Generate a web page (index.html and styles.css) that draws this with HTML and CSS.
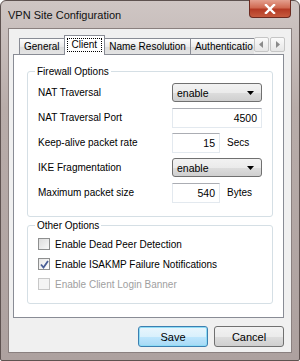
FILE: index.html
```html
<!DOCTYPE html>
<html lang="en">
<head>
    <meta charset="UTF-8">
    <title>VPN Site Configuration</title>
    <link rel="stylesheet" href="styles.css">
</head>
<body>
    <div class="window">
        <div class="titlebar">
            <span class="title">VPN Site Configuration</span>
            <span class="close">
                <svg width="12" height="10" viewBox="0 0 12 10"><path d="M2 1 L10 9 M10 1 L2 9" stroke="#fff" stroke-width="2.4" stroke-linecap="square"/></svg>
            </span>
        </div>
        <div class="client">
            <div class="tabstrip">
                <div class="tab">General</div>
                <div class="tab active"><span class="focus">Client</span></div>
                <div class="tab">Name Resolution</div>
                <div class="tab last">Authenticatio</div>
                <div class="scroller">
                    <span class="arrow"><svg width="5" height="7" viewBox="0 0 5 7"><path d="M4 0 L0 3.5 L4 7 Z" fill="#8a8a8a"/></svg></span>
                    <span class="arrow"><svg width="5" height="7" viewBox="0 0 5 7"><path d="M1 0 L5 3.5 L1 7 Z" fill="#8a8a8a"/></svg></span>
                </div>
            </div>
            <div class="panel">
                <fieldset class="group firewall">
                    <legend>Firewall Options</legend>
                    <div class="row">
                        <span class="label">NAT Traversal</span>
                        <div class="combo">enable<svg width="7" height="4" viewBox="0 0 7 4"><path d="M0 0 H7 L3.5 4 Z" fill="#000"/></svg></div>
                    </div>
                    <div class="row">
                        <span class="label">NAT Traversal Port</span>
                        <div class="field wide">4500</div>
                    </div>
                    <div class="row">
                        <span class="label">Keep-alive packet rate</span>
                        <div class="field narrow">15</div>
                        <span class="unit">Secs</span>
                    </div>
                    <div class="row">
                        <span class="label">IKE Fragmentation</span>
                        <div class="combo">enable<svg width="7" height="4" viewBox="0 0 7 4"><path d="M0 0 H7 L3.5 4 Z" fill="#000"/></svg></div>
                    </div>
                    <div class="row">
                        <span class="label">Maximum packet size</span>
                        <div class="field narrow">540</div>
                        <span class="unit">Bytes</span>
                    </div>
                </fieldset>
                <fieldset class="group other">
                    <legend>Other Options</legend>
                    <div class="check"><span class="box"></span>Enable Dead Peer Detection</div>
                    <div class="check"><span class="box checked"><svg width="9" height="9" viewBox="0 0 9 9"><path d="M1 4.5 L3.5 7.5 L8 1" fill="none" stroke="#4a5f97" stroke-width="1.8"/></svg></span>Enable ISAKMP Failure Notifications</div>
                    <div class="check disabled"><span class="box"></span>Enable Client Login Banner</div>
                </fieldset>
            </div>
            <div class="buttons">
                <button class="btn default">Save</button>
                <button class="btn">Cancel</button>
            </div>
        </div>
    </div>
</body>
</html>
```

FILE: styles.css
```css
body { margin: 0; background: #fff; font-family: "Liberation Sans", Arial, sans-serif; font-size: 10px; color: #000; }

.window { width: 300px; height: 361px; box-sizing: border-box; border: 1px solid #5e5250; border-radius: 6px 6px 2px 2px; background: linear-gradient(180deg, #cfc6c4 0%, #b8aca9 30%, #ada19f 100%); padding: 0 7px 7px 7px; }

.titlebar { display: flex; justify-content: space-between; align-items: flex-start; height: 27px; }
.title { padding-top: 8px; font-size: 11px; color: #111; }
.close { width: 42px; height: 18px; margin-top: -1px; margin-right: 1px; box-sizing: border-box; border: 1px solid #6c2a20; border-top: none; border-radius: 0 0 4px 4px; background: linear-gradient(180deg, #e4a08f 0%, #d06a52 45%, #b43a24 55%, #c65a3e 100%); display: flex; align-items: center; justify-content: center; }

.client { height: 325px; box-sizing: border-box; border: 1px solid #8a807f; background: #f0f0f0; padding: 6px 7px 0 4px; }

.tabstrip { display: flex; align-items: flex-end; height: 19px; padding-left: 6px; }
.tab { height: 16px; box-sizing: border-box; border: 1px solid #898c95; border-bottom: none; border-right: none; background: linear-gradient(180deg, #fdfdfd 0%, #ebebeb 50%, #dcdcdc 51%, #e4e4e4 100%); padding: 2px 4px 0 4px; white-space: nowrap; }
.tab.active { height: 20px; margin-bottom: -1px; position: relative; z-index: 1; background: #fff; border-right: 1px solid #898c95; padding: 2px 2px 0 2px; }
.tab.active + .tab { border-left: none; }
.focus { display: inline-block; border: 1px dotted #000; padding: 0 4px; line-height: 12px; }
.tab.last { padding-right: 1px; }
.scroller { display: flex; gap: 1px; height: 15px; margin-bottom: 2px; }
.arrow { width: 15px; box-sizing: border-box; border: 1px solid #c5c5c5; border-radius: 2px; background: linear-gradient(180deg, #fafafa, #e6e6e6); display: flex; align-items: center; justify-content: center; }

.panel { height: 264px; box-sizing: border-box; border: 1px solid #898c95; background: #fff; padding: 11px 10px 0 13px; }

.group { margin: 0; border: 1px solid #d5dfe5; border-radius: 3px; padding: 0 0 0 10px; }
.group legend { padding: 0 2px; margin-left: -3px; }
.firewall { height: 146px; padding-top: 3px; }
.other { height: 79px; margin-top: 3px; padding-top: 3px; }

.row { display: flex; align-items: center; height: 25px; }
.label { width: 134px; }
.combo { width: 90px; height: 19px; box-sizing: border-box; border: 1px solid #707070; border-radius: 3px; background: linear-gradient(180deg, #f2f2f2 0%, #ebebeb 50%, #dddddd 51%, #cfcfcf 100%); display: flex; align-items: center; justify-content: space-between; padding: 0 7px 0 4px; font-size: 10.5px; }
.field { height: 20px; box-sizing: border-box; border: 1px solid #e3e9ef; border-top-color: #abadb3; background: #fff; text-align: right; padding: 3px 4px 0 0; font-size: 10.5px; }
.field.wide { width: 90px; }
.field.narrow { width: 48px; }
.unit { margin-left: 7px; }

.check { display: flex; align-items: center; height: 20px; }
.box { width: 12px; height: 12px; box-sizing: border-box; border: 1px solid #8e8f8f; background: linear-gradient(135deg, #dcdcdc, #f8f8f8); margin-right: 5px; display: flex; align-items: center; justify-content: center; }
.box.checked { background: linear-gradient(135deg, #e6e6e6, #ffffff); }
.check.disabled { color: #a0a0a0; }
.check.disabled .box { border-color: #c8c8c8; background: #f4f4f4; }

.buttons { display: flex; justify-content: flex-end; gap: 6px; padding-top: 8px; }
.btn { width: 70px; height: 21px; font-family: inherit; font-size: 11px; border: 1px solid #707070; border-radius: 3px; background: linear-gradient(180deg, #f2f2f2 0%, #ebebeb 50%, #dddddd 51%, #cfcfcf 100%); padding: 0; color: #000; }
.btn.default { border-color: #3c7fb1; box-shadow: inset 0 0 0 1px #8fdcf5; background: linear-gradient(180deg, #e9f6fd 0%, #d9f0fc 50%, #bee6fd 51%, #a7d9f5 100%); }
```
